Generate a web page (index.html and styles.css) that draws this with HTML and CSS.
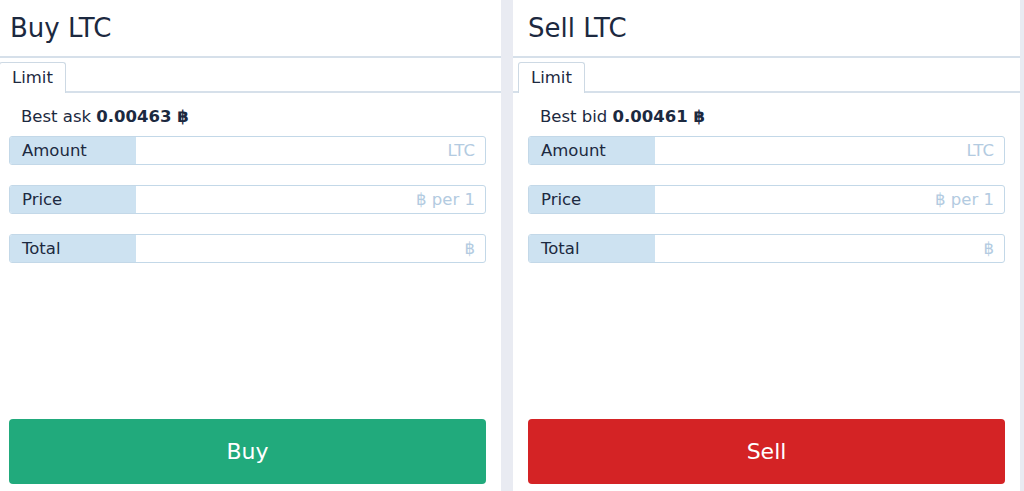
FILE: index.html
```html
<!DOCTYPE html>
<html>
<head>
<meta charset="utf-8">
<link rel="stylesheet" href="styles.css">
</head>
<body>
<div class="board">
  <section class="panel">
    <h1 class="title">Buy LTC</h1>
    <div class="tabs"><div class="tab">Limit</div></div>
    <div class="body">
      <div class="best">Best ask <b>0.00463 ฿</b></div>
      <div class="field"><span class="label">Amount</span><span class="unit">LTC</span></div>
      <div class="field"><span class="label">Price</span><span class="unit">฿ per 1</span></div>
      <div class="field"><span class="label">Total</span><span class="unit">฿</span></div>
      <button class="action buy">Buy</button>
    </div>
  </section>
  <section class="panel">
    <h1 class="title">Sell LTC</h1>
    <div class="tabs"><div class="tab">Limit</div></div>
    <div class="body">
      <div class="best">Best bid <b>0.00461 ฿</b></div>
      <div class="field"><span class="label">Amount</span><span class="unit">LTC</span></div>
      <div class="field"><span class="label">Price</span><span class="unit">฿ per 1</span></div>
      <div class="field"><span class="label">Total</span><span class="unit">฿</span></div>
      <button class="action sell">Sell</button>
    </div>
  </section>
</div>
</body>
</html>
```
FILE: styles.css
```css
html, body {
  margin: 0;
  padding: 0;
  height: 491px;
  overflow: hidden;
  background: #e9ebf2;
  font-family: "DejaVu Sans", Verdana, sans-serif;
  color: #1c2940;
}
.board {
  display: flex;
  gap: 12px;
  margin-left: -6px;
  height: 491px;
}
.panel {
  width: 507px;
  background: #fff;
  display: flex;
  flex-direction: column;
}
.title {
  margin: 0;
  height: 58px;
  box-sizing: border-box;
  padding: 13px 0 0 16px;
  font-size: 26px;
  font-weight: normal;
  line-height: 31px;
  border-bottom: 2px solid #d6e0ea;
}
.panel + .panel .title { padding-left: 15px; }
.tabs {
  height: 35px;
  box-sizing: border-box;
  padding: 4px 0 0 5px;
  display: flex;
  border-bottom: 2px solid #d6e0ea;
}
.tab {
  border: 1px solid #cdd9e4;
  border-bottom: none;
  border-radius: 3px 3px 0 0;
  padding: 0 12px;
  font-size: 16.5px;
  line-height: 29px;
  height: 31px;
  margin-bottom: -2px;
  background: #fff;
  box-sizing: border-box;
}
.body {
  flex: 1;
  display: flex;
  flex-direction: column;
  padding: 13px 15px 7px 15px;
}
.best {
  font-size: 16.5px;
  line-height: 22px;
  padding-left: 12px;
  margin-bottom: 8px;
}
.best b { font-weight: bold; }
.field {
  height: 29px;
  box-sizing: border-box;
  border: 1px solid #c3d8e8;
  border-radius: 3px;
  display: flex;
  align-items: center;
  margin-bottom: 20px;
  overflow: hidden;
  font-size: 16.5px;
}
.label {
  width: 126px;
  height: 100%;
  background: #cde2f1;
  padding-left: 12px;
  box-sizing: border-box;
  display: flex;
  align-items: center;
}
.unit {
  margin-left: auto;
  padding-right: 10px;
  color: #b3cbe1;
}
.action {
  margin-top: auto;
  height: 65px;
  border: none;
  border-radius: 4px;
  color: #fff;
  font-family: "DejaVu Sans", Verdana, sans-serif;
  font-size: 22px;
}
.buy { background: #21aa7c; }
.sell { background: #d42325; }
```
